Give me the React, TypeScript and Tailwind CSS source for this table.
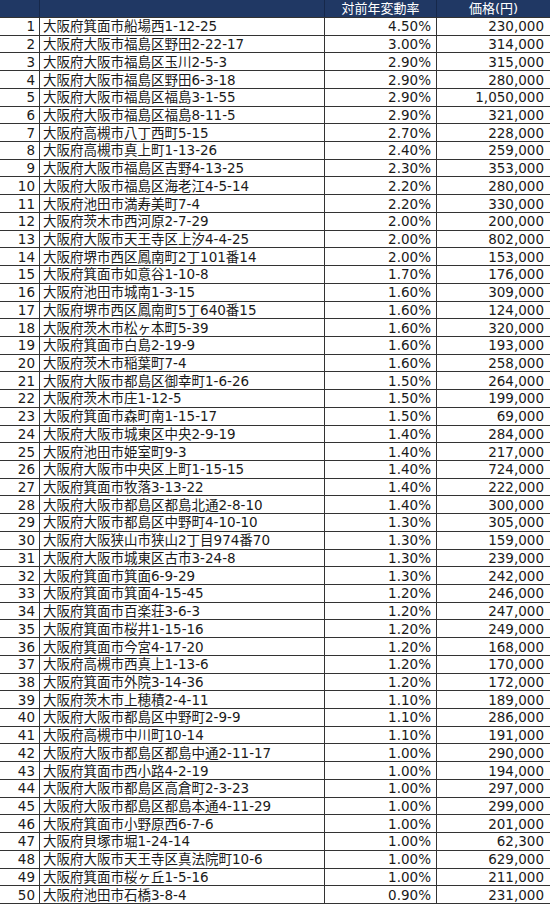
const ROWS: [string, string, string][] = [
  ["大阪府箕面市船場西1-12-25", "4.50%", "230,000"],
  ["大阪府大阪市福島区野田2-22-17", "3.00%", "314,000"],
  ["大阪府大阪市福島区玉川2-5-3", "2.90%", "315,000"],
  ["大阪府大阪市福島区野田6-3-18", "2.90%", "280,000"],
  ["大阪府大阪市福島区福島3-1-55", "2.90%", "1,050,000"],
  ["大阪府大阪市福島区福島8-11-5", "2.90%", "321,000"],
  ["大阪府高槻市八丁西町5-15", "2.70%", "228,000"],
  ["大阪府高槻市真上町1-13-26", "2.40%", "259,000"],
  ["大阪府大阪市福島区吉野4-13-25", "2.30%", "353,000"],
  ["大阪府大阪市福島区海老江4-5-14", "2.20%", "280,000"],
  ["大阪府池田市満寿美町7-4", "2.20%", "330,000"],
  ["大阪府茨木市西河原2-7-29", "2.00%", "200,000"],
  ["大阪府大阪市天王寺区上汐4-4-25", "2.00%", "802,000"],
  ["大阪府堺市西区鳳南町2丁101番14", "2.00%", "153,000"],
  ["大阪府箕面市如意谷1-10-8", "1.70%", "176,000"],
  ["大阪府池田市城南1-3-15", "1.60%", "309,000"],
  ["大阪府堺市西区鳳南町5丁640番15", "1.60%", "124,000"],
  ["大阪府茨木市松ヶ本町5-39", "1.60%", "320,000"],
  ["大阪府箕面市白島2-19-9", "1.60%", "193,000"],
  ["大阪府茨木市稲葉町7-4", "1.60%", "258,000"],
  ["大阪府大阪市都島区御幸町1-6-26", "1.50%", "264,000"],
  ["大阪府茨木市庄1-12-5", "1.50%", "199,000"],
  ["大阪府箕面市森町南1-15-17", "1.50%", "69,000"],
  ["大阪府大阪市城東区中央2-9-19", "1.40%", "284,000"],
  ["大阪府池田市姫室町9-3", "1.40%", "217,000"],
  ["大阪府大阪市中央区上町1-15-15", "1.40%", "724,000"],
  ["大阪府箕面市牧落3-13-22", "1.40%", "222,000"],
  ["大阪府大阪市都島区都島北通2-8-10", "1.40%", "300,000"],
  ["大阪府大阪市都島区中野町4-10-10", "1.30%", "305,000"],
  ["大阪府大阪狭山市狭山2丁目974番70", "1.30%", "159,000"],
  ["大阪府大阪市城東区古市3-24-8", "1.30%", "239,000"],
  ["大阪府箕面市箕面6-9-29", "1.30%", "242,000"],
  ["大阪府箕面市箕面4-15-45", "1.20%", "246,000"],
  ["大阪府箕面市百楽荘3-6-3", "1.20%", "247,000"],
  ["大阪府箕面市桜井1-15-16", "1.20%", "249,000"],
  ["大阪府箕面市今宮4-17-20", "1.20%", "168,000"],
  ["大阪府高槻市西真上1-13-6", "1.20%", "170,000"],
  ["大阪府箕面市外院3-14-36", "1.20%", "172,000"],
  ["大阪府茨木市上穂積2-4-11", "1.10%", "189,000"],
  ["大阪府大阪市都島区中野町2-9-9", "1.10%", "286,000"],
  ["大阪府高槻市中川町10-14", "1.10%", "191,000"],
  ["大阪府大阪市都島区都島中通2-11-17", "1.00%", "290,000"],
  ["大阪府箕面市西小路4-2-19", "1.00%", "194,000"],
  ["大阪府大阪市都島区高倉町2-3-23", "1.00%", "297,000"],
  ["大阪府大阪市都島区都島本通4-11-29", "1.00%", "299,000"],
  ["大阪府箕面市小野原西6-7-6", "1.00%", "201,000"],
  ["大阪府貝塚市堀1-24-14", "1.00%", "62,300"],
  ["大阪府大阪市天王寺区真法院町10-6", "1.00%", "629,000"],
  ["大阪府箕面市桜ヶ丘1-5-16", "1.00%", "211,000"],
  ["大阪府池田市石橋3-8-4", "0.90%", "231,000"],
];

export default function App() {
  return (
    <div
      className="w-[550px] bg-white text-[13.5px] leading-[16px] text-[#1a1a1a]"
      style={{ fontFamily: '"DejaVu Sans", "Noto Sans CJK JP", sans-serif' }}
    >
      {/* Header */}
      <div className="grid h-[18px] grid-cols-[40px_285px_112px_113px] border-b border-[#333] bg-[#203864] text-white">
        <div className="border-r border-[#16284a]" />
        <div className="border-r border-[#16284a]" />
        <div className="flex items-center justify-center border-r border-[#16284a] text-[13px]">
          対前年変動率
        </div>
        <div className="flex items-center justify-center text-[13px]">価格(円)</div>
      </div>

      {ROWS.map(([addr, rate, price], i) => (
        <div
          key={i}
          className="grid h-[17.72px] grid-cols-[40px_285px_112px_113px] border-b border-[#333]"
        >
          <div className="flex items-center justify-end border-r border-[#333] pr-[4px]">
            {i + 1}
          </div>
          <div className="flex items-center overflow-hidden whitespace-nowrap border-r border-[#333] pl-[3px]">
            {addr}
          </div>
          <div className="flex items-center justify-end border-r border-[#333] pr-[5px]">
            {rate}
          </div>
          <div className="flex items-center justify-end pr-[6px]">{price}</div>
        </div>
      ))}
    </div>
  );
}
